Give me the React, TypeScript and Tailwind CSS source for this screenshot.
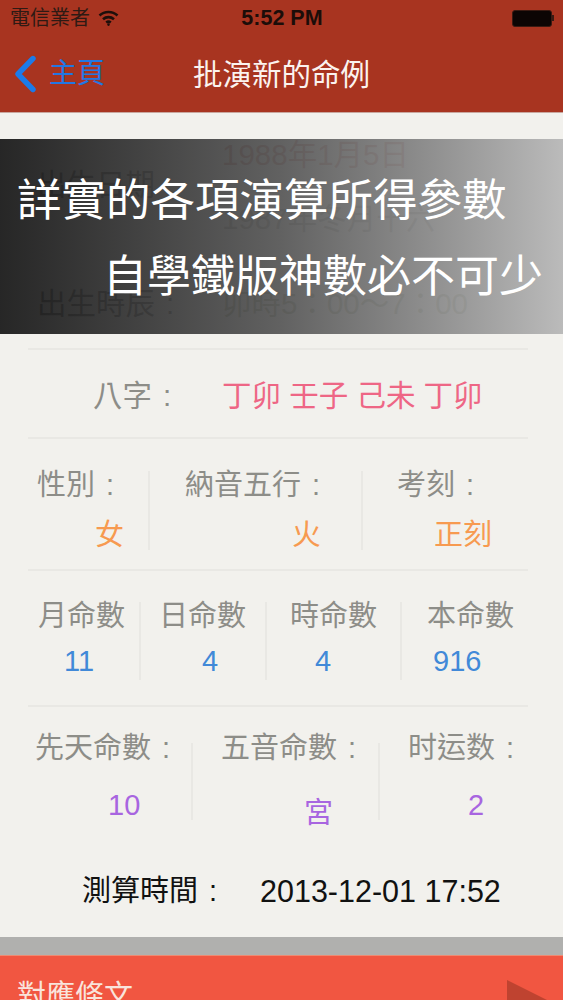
const font = { fontFamily: '"Liberation Sans", "Noto Sans CJK TC", sans-serif' };

function Rule() {
  return <div className="ml-[28px] h-[2px] w-[500px] bg-[#e9e8e4]" />;
}

function Colon() {
  return <span className="ml-[11px]">:</span>;
}

function Cell({
  label,
  value,
  labelClass,
  valueClass,
  colon = false,
  sep = "",
}: {
  label: string;
  value: string;
  labelClass: string;
  valueClass: string;
  colon?: boolean;
  sep?: string;
}) {
  return (
    <div className="relative">
      <p className={`whitespace-nowrap text-[#8d8d88] ${labelClass}`}>
        {label}
        {colon && <Colon />}
      </p>
      <p className={`whitespace-nowrap ${valueClass}`}>{value}</p>
      {sep && <span className={`absolute right-0 w-[2px] bg-[#e9e8e4] ${sep}`} />}
    </div>
  );
}

export default function App() {
  return (
    <div style={font} className="relative h-[1000px] w-[563px] overflow-hidden bg-[#f2f1ed]">
      <header className="h-[113px] border-b border-[#c9a79f] bg-[#a83420]">
        <div className="flex h-[36px] items-center justify-between pl-[10px] pr-[9px]">
          <div className="flex w-[180px] items-center gap-[8px]">
            <span className="text-[20px] leading-none text-[#2e1a14]">電信業者</span>
            <svg width="21" height="16" viewBox="0 0 21 16" fill="none" stroke="#1d0f0b" strokeWidth="2.6">
              <path d="M1.5 5.5c5-4.6 13-4.6 18 0" />
              <path d="M5 9.2c3.2-2.8 7.8-2.8 11 0" />
              <path d="M8.2 12.5c1.3-1 3.3-1 4.6 0" />
              <circle cx="10.5" cy="14.6" r="0.6" fill="#1d0f0b" strokeWidth="1.4" />
            </svg>
          </div>
          <span className="pt-[2px] text-[21.5px] font-bold leading-none text-[#1c0d09]">5:52 PM</span>
          <div className="flex w-[180px] justify-end">
            <div className="flex items-center">
              <div className="h-[17px] w-[40px] rounded-[3px] border border-[#3a1a12] bg-[#0c0504]" />
              <div className="h-[6px] w-[2px] bg-[#3a1a12]" />
            </div>
          </div>
        </div>
        <div className="relative flex h-[76px] items-center justify-center pt-[2px]">
          <div className="absolute bottom-0 left-[13px] top-0 flex items-center gap-[12px]">
            <svg width="24" height="38" viewBox="0 0 24 38" fill="none" stroke="#1b7bea" strokeWidth="5.4" strokeLinecap="round" strokeLinejoin="round">
              <path d="M20 3.5 L5 19 L20 34.5" />
            </svg>
            <span className="text-[28px] leading-none text-[#2277e4]">主頁</span>
          </div>
          <h1 className="text-[29.5px] leading-none text-[#fbf3ef]">批演新的命例</h1>
        </div>
      </header>

      <main>
        <div className="h-[235px] pt-[27px] text-[29.5px] leading-none">
          <div className="flex pl-[37px]">
            <span className="flex w-[185px] items-center pb-[3px] text-[#2a2a2a]">出生日期</span>
            <div>
              <p className="text-[#b4463a]">1988年1月5日</p>
              <p className="mt-[34px] text-[#7d7d72]">1987年冬月十六</p>
            </div>
          </div>
          <div className="mt-[56px] flex pl-[37px]">
            <span className="w-[185px] whitespace-nowrap text-[#1e1e1e]">
              出生時辰
              <Colon />
            </span>
            <span className="whitespace-nowrap text-[#6e7c4c]">卯時5：00～7：00</span>
          </div>
        </div>
        <Rule />
        <div className="flex h-[87px] items-center pl-[93px] pt-[4px] text-[29.5px] leading-none">
          <span className="w-[129px] whitespace-nowrap text-[#8d8d88]">
            八字
            <Colon />
          </span>
          <span className="whitespace-nowrap text-[#ee6685]">丁卯 壬子 己未 丁卯</span>
        </div>
        <Rule />
        <div className="grid h-[130px] grid-cols-[150px_213px_1fr] items-start pt-[32px] text-[29px] leading-none">
          <Cell
            colon
            label="性別"
            value="女"
            sep="top-0 bottom-0"
            labelClass="pl-[37px]"
            valueClass="mt-[21px] pl-[95px] text-[#f79a50]"
          />
          <Cell
            colon
            label="納音五行"
            value="火"
            sep="top-0 bottom-0"
            labelClass="pl-[35px]"
            valueClass="mt-[21px] pl-[142px] text-[#f79a50]"
          />
          <Cell
            colon
            label="考刻"
            value="正刻"
            labelClass="pl-[34px]"
            valueClass="mt-[21px] pl-[71px] text-[#f79a50]"
          />
        </div>
        <Rule />
        <div className="grid h-[134px] grid-cols-[141px_126px_135px_1fr] items-start pt-[31px] text-[29px] leading-none">
          <Cell
            label="月命數"
            value="11"
            sep="top-0 bottom-0"
            labelClass="pl-[38px]"
            valueClass="mt-[16px] pb-[4px] pl-[64px] text-[#4189d8]"
          />
          <Cell
            label="日命數"
            value="4"
            sep="top-0 bottom-0"
            labelClass="pl-[18px]"
            valueClass="mt-[16px] pb-[4px] pl-[61px] text-[#4189d8]"
          />
          <Cell
            label="時命數"
            value="4"
            sep="top-0 bottom-0"
            labelClass="pl-[23px]"
            valueClass="mt-[16px] pb-[4px] pl-[48px] text-[#4189d8]"
          />
          <Cell
            label="本命數"
            value="916"
            labelClass="pl-[25px]"
            valueClass="mt-[16px] pl-[31px] text-[#4189d8]"
          />
        </div>
        <Rule />
        <div className="grid h-[123px] grid-cols-[193px_187px_1fr] items-start pt-[27px] text-[29px] leading-none">
          <Cell
            colon
            label="先天命數"
            value="10"
            sep="top-[9px] h-[77px]"
            labelClass="pl-[35px]"
            valueClass="mt-[28px] pl-[108px] text-[#a865e0]"
          />
          <Cell
            colon
            label="五音命數"
            value="宮"
            sep="top-[9px] h-[77px]"
            labelClass="pl-[28px]"
            valueClass="mt-[36px] pl-[111px] text-[#a865e0]"
          />
          <Cell
            colon
            label="时运数"
            value="2"
            labelClass="pl-[28px]"
            valueClass="mt-[28px] pl-[88px] text-[#a865e0]"
          />
        </div>
        <div className="flex h-[107px] items-center pl-[82px] pt-[16px] text-[#111111]">
          <span className="w-[178px] whitespace-nowrap text-[29px] leading-none">
            測算時間
            <Colon />
          </span>
          <span className="text-[30.5px] leading-none">2013-12-01 17:52</span>
        </div>
        <div className="h-[18px] bg-[#b0b0ae]" />
        <div className="flex h-[45px] justify-between overflow-hidden border-t border-[#ee8a72] bg-[#f15641] pl-[17px]">
          <span className="pt-[26px] text-[29px] leading-none text-[#f9e4dc]">對應條文</span>
          <svg width="56" height="44" viewBox="0 0 56 44" className="mt-[24px]">
            <path d="M0 0 L40 20 L40 44 L0 44 Z" fill="#bf4330" />
          </svg>
        </div>
      </main>

      {/* promo overlay sitting on top of the details */}
      <div className="absolute left-0 top-[139px] h-[195px] w-full bg-gradient-to-r from-[#1c1c1c]/95 via-[#5a5a5a]/95 to-[#b8b8b8]/95 leading-none text-white">
        <p className="whitespace-nowrap pl-[17px] pt-[40px] text-[44.5px]">詳實的各項演算所得參數</p>
        <p className="mt-[31px] whitespace-nowrap pl-[103px] text-[44px]">自學鐵版神數必不可少</p>
      </div>
    </div>
  );
}
